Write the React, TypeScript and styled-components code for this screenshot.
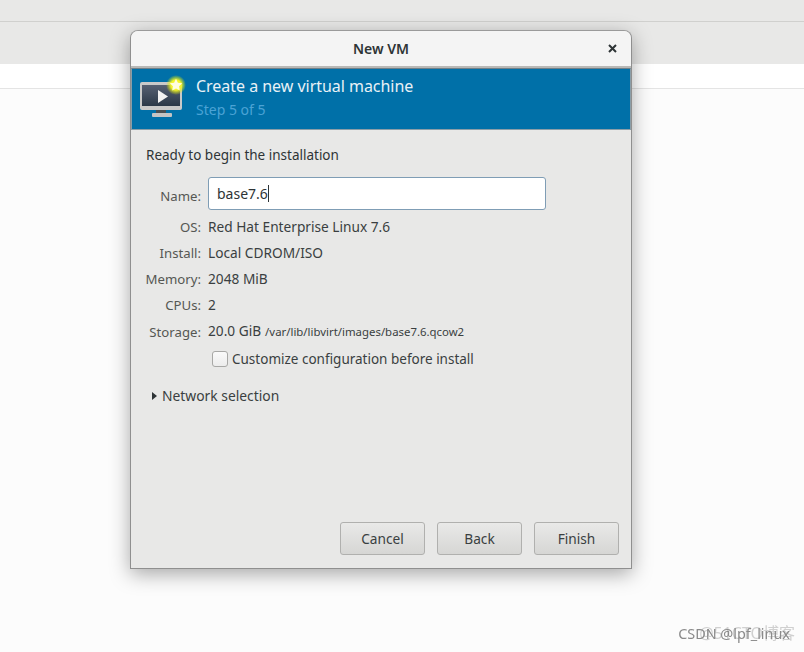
import { Fragment } from "react";
import styled, { createGlobalStyle } from "styled-components";

const GlobalStyle = createGlobalStyle`
  html, body {
    margin: 0;
    padding: 0;
    background: #fcfcfc;
  }
  * {
    box-sizing: border-box;
  }
`;

const Page = styled.div`
  position: relative;
  width: 804px;
  height: 652px;
  overflow: hidden;
  background: #fcfcfc;
  font-family: "Noto Sans", "Open Sans", sans-serif;
  font-size: 13.7px;
  color: #2e3436;
`;

const TopStrip = styled.div`
  height: 22px;
  background: #e8e8e7;
  border-bottom: 1px solid #d0d0ce;
`;

const ToolStrip = styled.div`
  height: 42px;
  background: #e8e8e7;
`;

const SubStrip = styled.div`
  height: 25px;
  background: #ffffff;
  border-bottom: 1px solid #e4e4e4;
`;

const Dialog = styled.div`
  position: absolute;
  left: 130px;
  top: 30px;
  width: 502px;
  height: 539px;
  display: flex;
  flex-direction: column;
  background: #e8e8e7;
  border: 1px solid #8f8f8f;
  border-top-color: #9a9a9a;
  border-radius: 8px 8px 0 0;
  box-shadow: 0 5px 20px rgba(0, 0, 0, 0.34);
`;

const TitleBar = styled.div`
  position: relative;
  flex: none;
  height: 37px;
  padding-bottom: 1px;
  display: flex;
  align-items: center;
  justify-content: center;
  background: #f4f4f4;
  border-radius: 7px 7px 0 0;
  border-bottom: 2px solid #b8b8b6;
  font-weight: 600;
  font-size: 14px;
  color: #2e3436;
`;

const CloseIcon = styled.svg`
  position: absolute;
  right: 14px;
  top: 13px;
  width: 9px;
  height: 9px;
`;

const Banner = styled.div`
  flex: none;
  height: 62px;
  display: flex;
  align-items: center;
  gap: 10px;
  padding: 0 0 2px 8px;
  background: #0070a8;
  border: 1px solid #8b9ea8;
  border-top-color: #6f7f88;
`;

const BannerText = styled.div`
  display: flex;
  flex-direction: column;
  gap: 3px;
`;

const BannerTitle = styled.div`
  font-size: 16px;
  letter-spacing: -0.03px;
  line-height: 21px;
  color: #e8f1f6;
`;

const BannerStep = styled.div`
  font-size: 14px;
  line-height: 20px;
  color: #4ba3d5;
`;

const Body = styled.div`
  flex: 1;
  display: flex;
  flex-direction: column;
  padding: 15px 12px 13px 15px;
`;

const Heading = styled.div`
  font-size: 13.5px;
  line-height: 20px;
  margin-bottom: 12px;
`;

const Form = styled.div`
  display: grid;
  grid-template-columns: 55px 1fr;
  column-gap: 7px;
  align-items: center;
`;

const Label = styled.div`
  justify-self: end;
  font-size: 13.2px;
  line-height: 26px;
  white-space: nowrap;
  color: #555753;
`;

const Value = styled.div`
  line-height: 26px;
  white-space: nowrap;
  color: #3a3f41;
`;

const Path = styled.span`
  margin-left: 4px;
  font-size: 11.4px;
`;

const NameField = styled.div`
  width: 338px;
  height: 33px;
  margin-bottom: 4px;
  padding-left: 8px;
  display: flex;
  align-items: center;
  background: #ffffff;
  border: 1px solid #7f9db5;
  border-radius: 3px;
  font-size: 14px;
  color: #2e3436;
`;

const Caret = styled.span`
  width: 1px;
  height: 17px;
  background: #2e3436;
`;

const CheckRow = styled.label`
  grid-column: 2;
  display: flex;
  align-items: center;
  gap: 4px;
  margin: 4px 0 0 4px;
  font-size: 13.5px;
  line-height: 20px;
  color: #3a3f41;
`;

const CheckBox = styled.span`
  width: 16px;
  height: 16px;
  background: linear-gradient(#fafafa, #ececec);
  border: 1px solid #a8a8a6;
  border-radius: 3px;
`;

const Expander = styled.div`
  display: flex;
  align-items: center;
  gap: 5px;
  margin: 17px 0 0 6px;
  font-size: 13.85px;
  line-height: 20px;
  color: #3a3f41;
`;

const Arrow = styled.span`
  width: 0;
  height: 0;
  border-left: 5px solid #2e3436;
  border-top: 4.5px solid transparent;
  border-bottom: 4.5px solid transparent;
`;

const Footer = styled.div`
  margin-top: auto;
  display: flex;
  justify-content: flex-end;
  gap: 12px;
`;

const Button = styled.button`
  width: 85px;
  height: 33px;
  padding: 0;
  background: linear-gradient(#e9e9e8, #d6d6d4);
  border: 1px solid #b0b0ae;
  border-radius: 3px;
  font: inherit;
  color: #3a3f41;
`;

const Watermark = styled.div`
  position: absolute;
  right: 14px;
  bottom: 9px;
  font-size: 14.4px;
  line-height: 18px;
  color: #8a8a8a;
  filter: blur(0.6px);
`;

const WatermarkGhost = styled.div`
  position: absolute;
  right: 9px;
  bottom: 10px;
  font-family: "Noto Sans", "Noto Sans CJK SC", sans-serif;
  font-size: 16px;
  line-height: 18px;
  color: #d0d0d0;
  filter: blur(0.6px);
`;

const VmIcon = () => (
  <svg width="46" height="46" viewBox="0 0 46 46">
    <defs>
      <radialGradient id="glow">
        <stop offset="0.5" stopColor="#f5f52a" />
        <stop offset="1" stopColor="#d8e800" stopOpacity="0" />
      </radialGradient>
      <linearGradient id="screen" x1="0" y1="0" x2="0" y2="1">
        <stop offset="0" stopColor="#566072" />
        <stop offset="1" stopColor="#2b3848" />
      </linearGradient>
    </defs>
    <rect x="16" y="34" width="10" height="5" fill="#4a4f52" />
    <rect x="12" y="38" width="20" height="4" rx="1" fill="#c4c4c4" />
    <rect x="0" y="7" width="42" height="28" rx="2" fill="#c9c9c9" />
    <rect x="2" y="10" width="38" height="21" fill="url(#screen)" />
    <path d="M18 15 L28 21.5 L18 28 Z" fill="#f2f2f2" />
    <circle cx="36" cy="10" r="10" fill="url(#glow)" />
    <path
      d="M36 3.8 L37.9 7.7 L42.2 8.3 L39.1 11.3 L39.8 15.6 L36 13.6 L32.2 15.6 L32.9 11.3 L29.8 8.3 L34.1 7.7 Z"
      fill="#fffde0"
    />
  </svg>
);

const specs = [
  { label: "OS:", value: "Red Hat Enterprise Linux 7.6" },
  { label: "Install:", value: "Local CDROM/ISO" },
  { label: "Memory:", value: "2048 MiB" },
  { label: "CPUs:", value: "2" },
];

const App = () => {
  return (
    <Page>
      <GlobalStyle />
      <TopStrip />
      <ToolStrip />
      <SubStrip />
      <Dialog>
        <TitleBar>
          New VM
          <CloseIcon viewBox="0 0 9 9">
            <path d="M1 1 L8 8 M8 1 L1 8" stroke="#2e3436" strokeWidth="2" />
          </CloseIcon>
        </TitleBar>
        <Banner>
          <VmIcon />
          <BannerText>
            <BannerTitle>Create a new virtual machine</BannerTitle>
            <BannerStep>Step 5 of 5</BannerStep>
          </BannerText>
        </Banner>
        <Body>
          <Heading>Ready to begin the installation</Heading>
          <Form>
            <Label>Name:</Label>
            <NameField>
              base7.6
              <Caret />
            </NameField>
            {specs.map((spec) => (
              <Fragment key={spec.label}>
                <Label>{spec.label}</Label>
                <Value>{spec.value}</Value>
              </Fragment>
            ))}
            <Label>Storage:</Label>
            <Value>
              20.0 GiB
              <Path>/var/lib/libvirt/images/base7.6.qcow2</Path>
            </Value>
            <CheckRow>
              <CheckBox />
              Customize configuration before install
            </CheckRow>
          </Form>
          <Expander>
            <Arrow />
            Network selection
          </Expander>
          <Footer>
            <Button>Cancel</Button>
            <Button>Back</Button>
            <Button>Finish</Button>
          </Footer>
        </Body>
      </Dialog>
      <WatermarkGhost>@51CTO博客</WatermarkGhost>
      <Watermark>CSDN @lpf_linux</Watermark>
    </Page>
  );
};

export default App;
